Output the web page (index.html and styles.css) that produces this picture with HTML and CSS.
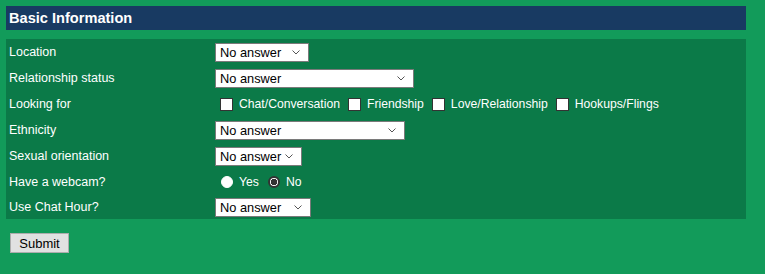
FILE: index.html
```html
<!DOCTYPE html>
<html lang="en">
<head>
<meta charset="UTF-8" />
<title>Basic Information</title>
<link rel="stylesheet" href="styles.css">
</head>
<body>
  <form class="profile">
    <h2 class="section-title">Basic Information</h2>
    <div class="panel">
      <div class="row">
        <label class="label">Location</label>
        <div class="field"><select class="sel w-loc"><option>No answer</option></select></div>
      </div>
      <div class="row">
        <label class="label">Relationship status</label>
        <div class="field"><select class="sel w-rel"><option>No answer</option></select></div>
      </div>
      <div class="row">
        <label class="label">Looking for</label>
        <div class="field checks">
          <label class="opt"><input type="checkbox" /> Chat/Conversation</label>
          <label class="opt"><input type="checkbox" /> Friendship</label>
          <label class="opt"><input type="checkbox" /> Love/Relationship</label>
          <label class="opt"><input type="checkbox" /> Hookups/Flings</label>
        </div>
      </div>
      <div class="row">
        <label class="label">Ethnicity</label>
        <div class="field"><select class="sel w-eth"><option>No answer</option></select></div>
      </div>
      <div class="row">
        <label class="label">Sexual orientation</label>
        <div class="field"><select class="sel w-sex"><option>No answer</option></select></div>
      </div>
      <div class="row">
        <label class="label">Have a webcam?</label>
        <div class="field radios">
          <label class="opt"><input type="radio" name="cam" /> Yes</label>
          <label class="opt"><input type="radio" name="cam" checked /> No</label>
        </div>
      </div>
      <div class="row">
        <label class="label">Use Chat Hour?</label>
        <div class="field"><select class="sel w-hour"><option>No answer</option></select></div>
      </div>
    </div>
    <button type="button" class="submit">Submit</button>
  </form>
</body>
</html>
```

FILE: styles.css
```css
body {
  margin: 0;
  background-color: #129b5a;
  font-family: "Liberation Sans", Arial, sans-serif;
  font-size: 12.5px;
  color: #fff;
}
.profile {
  padding: 6px 19px 0 6px;
}
.section-title {
  margin: 0;
  height: 24px;
  line-height: 24px;
  padding-left: 3px;
  background-color: #183a62;
  font-size: 14.6px;
  font-weight: bold;
}
.panel {
  margin-top: 9px;
  background-color: #0b7a48;
}
.row {
  display: flex;
  align-items: center;
  height: 26px;
}
.row:last-child {
  height: 24px;
}
.label {
  width: 209px;
  padding-left: 3px;
  box-sizing: border-box;
}
.field {
  display: flex;
  align-items: center;
}
.sel {
  appearance: none;
  -webkit-appearance: none;
  height: 19px;
  font-family: "Liberation Sans", Arial, sans-serif;
  font-size: 12.8px;
  border: 1px solid #7a7a7a;
  border-radius: 0;
  color: #000;
  padding: 0 18px 0 4px;
  background: #fff url("data:image/svg+xml;utf8,<svg xmlns='http://www.w3.org/2000/svg' width='8' height='5'><path d='M0.5 0.5 L4 4 L7.5 0.5' fill='none' stroke='%23555' stroke-width='1'/></svg>") no-repeat right 8px center;
}
.w-loc { width: 94px; }
.w-rel { width: 199px; }
.w-eth { width: 190px; }
.w-sex { width: 87px; }
.w-hour { width: 96px; }
.opt {
  display: flex;
  align-items: center;
  margin-right: 3px;
  font-size: 12.2px;
}
.opt input {
  appearance: none;
  -webkit-appearance: none;
  margin: 0 6px 0 5px;
  background-color: #fff;
  box-sizing: border-box;
}
.checks .opt input {
  width: 13px;
  height: 13px;
  border: 1px solid #333;
  border-radius: 0;
}
.radios .opt input {
  width: 12px;
  height: 12px;
  margin-left: 6px;
  border-radius: 50%;
  border: 1px solid #fff;
}
.radios .opt input:checked {
  border: 2px solid #333;
  background: radial-gradient(circle, #333 0 3px, #fff 3.5px);
}
.submit {
  margin: 14px 0 0 4px;
  height: 20px;
  width: 59px;
  padding: 0;
  font-family: "Liberation Sans", Arial, sans-serif;
  font-size: 13px;
  background-color: #e1e1e1;
  border: 1px solid #adadad;
  color: #000;
}
```
